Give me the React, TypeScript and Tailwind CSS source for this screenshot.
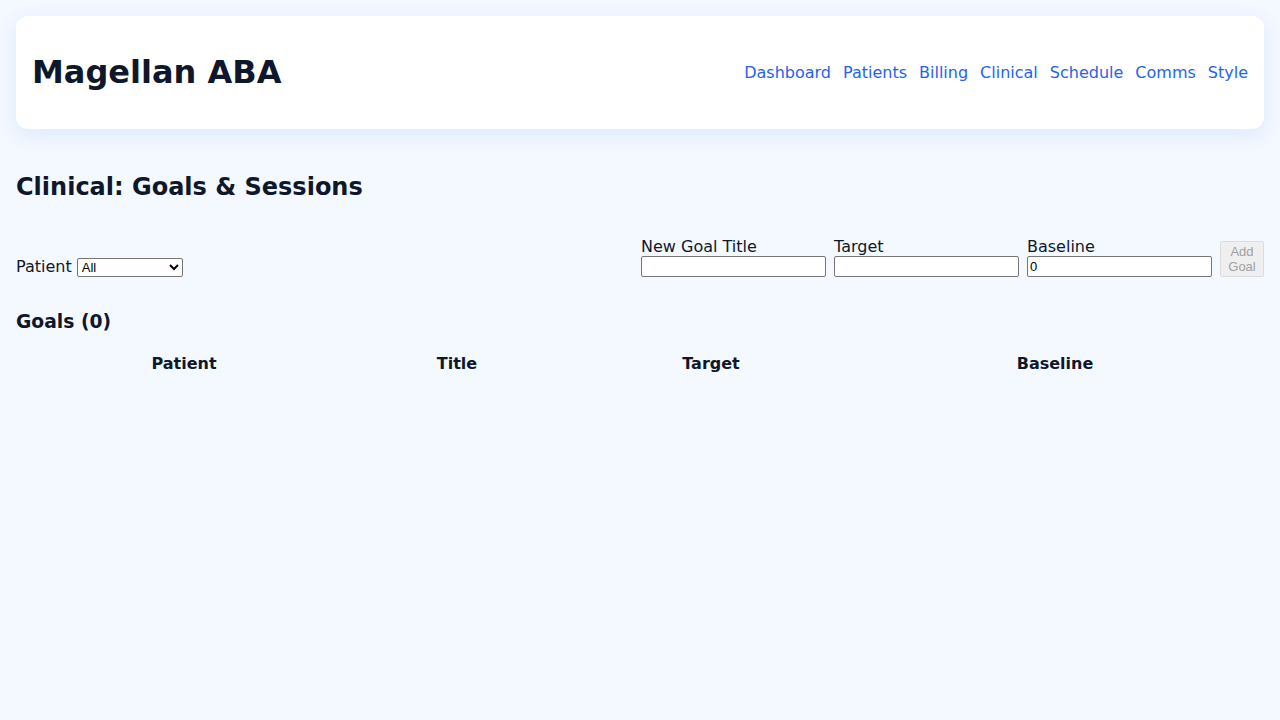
const navLinks = ["Dashboard", "Patients", "Billing", "Clinical", "Schedule", "Comms", "Style"];

const inputCls =
  "w-[185px] h-[21px] border border-[#767676] bg-white rounded-[2px] px-[2px] text-[13px] font-['Liberation_Sans',Arial,sans-serif] text-black";

export default function App() {
  return (
    <div className="min-h-screen bg-[#f4f8ff] p-4 font-['DejaVu_Sans',sans-serif] text-[#0f172a]">
      <header className="flex h-[113px] items-center justify-between rounded-xl bg-white px-4 shadow-[0_6px_20px_rgba(59,130,246,0.12)]">
        <h1 className="mb-[2px] text-[32px] font-bold leading-none">Magellan ABA</h1>
        <nav className="flex gap-3 text-base text-[#2563eb]">
          {navLinks.map((l) => (
            <a key={l} href="#" className="hover:underline">
              {l}
            </a>
          ))}
        </nav>
      </header>

      <h2 className="mt-[42px] text-2xl font-bold leading-8">Clinical: Goals &amp; Sessions</h2>

      <div className="mt-[35px] flex items-end justify-between">
        <label className="flex items-end gap-[5px] text-base leading-5">
          <span>Patient</span>
          <select className="h-[19px] w-[106px] border border-[#767676] bg-white rounded-[2px] text-[13px] leading-none font-['Liberation_Sans',Arial,sans-serif] text-black">
            <option>All</option>
          </select>
        </label>

        <div className="flex items-end gap-2">
          <label className="flex flex-col text-base leading-[18px]">
            <span>New Goal Title</span>
            <input className={inputCls} />
          </label>
          <label className="flex flex-col text-base leading-[18px]">
            <span>Target</span>
            <input className={inputCls} />
          </label>
          <label className="flex flex-col text-base leading-[18px]">
            <span>Baseline</span>
            <input className={inputCls} defaultValue="0" />
          </label>
          <button
            disabled
            className="h-[36px] w-[44px] rounded-[2px] border border-[#dcdcdc] bg-[#efefef] text-[13px] leading-[15px] text-[#a0a0a0] font-['Liberation_Sans',Arial,sans-serif]"
          >
            Add Goal
          </button>
        </div>
      </div>

      <h3 className="mt-[33px] text-[18.72px] font-bold leading-6">Goals (0)</h3>

      <table className="mt-[17px] w-[1234px]">
        <thead>
          <tr className="text-base font-bold">
            <th className="w-[336px] py-[1px]">Patient</th>
            <th className="w-[210px] py-[1px]">Title</th>
            <th className="w-[298px] py-[1px]">Target</th>
            <th className="py-[1px]">Baseline</th>
          </tr>
        </thead>
        <tbody />
      </table>
    </div>
  );
}
